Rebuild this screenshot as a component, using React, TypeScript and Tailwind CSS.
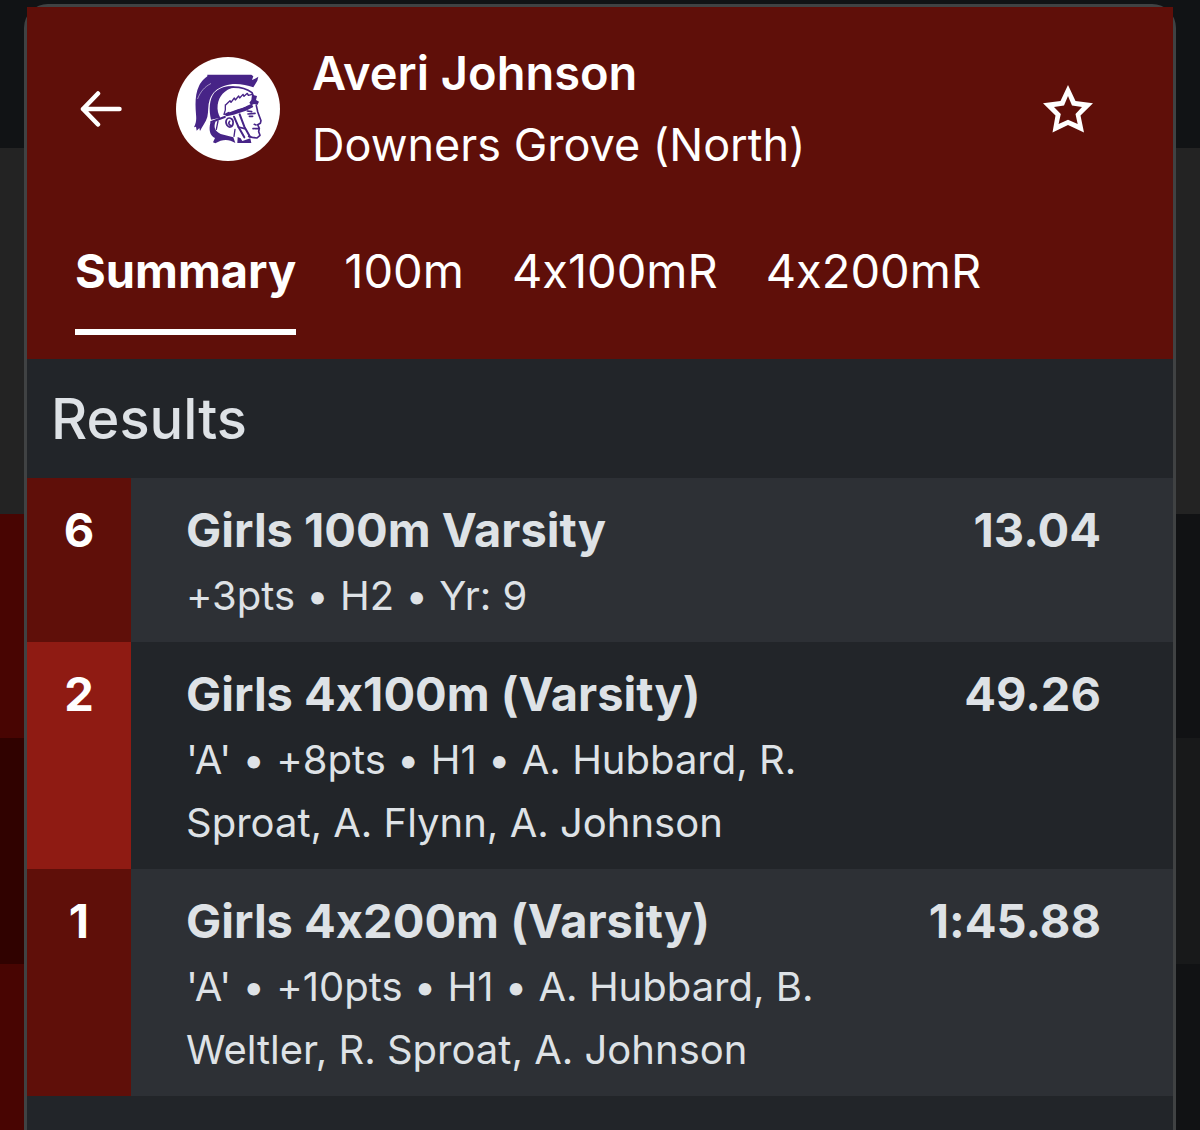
type Result = {
  place: number;
  event: string;
  mark: string;
  details: string;
};

const results: Result[] = [
  { place: 6, event: "Girls 100m Varsity", mark: "13.04", details: "+3pts • H2 • Yr: 9" },
  {
    place: 2,
    event: "Girls 4x100m (Varsity)",
    mark: "49.26",
    details: "'A' • +8pts • H1 • A. Hubbard, R. Sproat, A. Flynn, A. Johnson",
  },
  {
    place: 1,
    event: "Girls 4x200m (Varsity)",
    mark: "1:45.88",
    details: "'A' • +10pts • H1 • A. Hubbard, B. Weltler, R. Sproat, A. Johnson",
  },
];

const tabs = ["Summary", "100m", "4x100mR", "4x200mR"];

function BackArrow() {
  return (
    <svg viewBox="0 0 42 36" className="h-9 w-[42px]" fill="none" stroke="currentColor" strokeWidth="4.500" strokeLinecap="round" strokeLinejoin="round" aria-hidden="true">
      <path d="M39.500 18H3M18 2.500 3 18l15 15.500" />
    </svg>
  );
}

function Star() {
  return (
    <svg viewBox="0 0 50 48" className="h-12 w-[50px]" fill="currentColor" aria-hidden="true">
      <path
        fillRule="evenodd"
        d="M25 0 32.500 16 50 18.300 37.500 30.500 41 47.500 25 40 9.500 47.500 12.500 30.500 0 18.300 17.500 16ZM25 11 21 20.500 11 22 17.800 29 15.600 39 25 34.800 34.700 39 32.500 29 39 22 29 20.500Z"
      />
    </svg>
  );
}

function TeamLogo() {
  return (
    <svg viewBox="-42 -33 312 312" className="size-[104px] shrink-0 rounded-full bg-white" role="img" aria-label="Downers Grove North Trojans">
      <g fill="#472487">
        <path d="M52 20H184L190 25 186 36 195 32 205 26 202 38 190 58C164 48 130 44 104 53 82 60 66 74 59 95 53 112 56 130 52 147 48 163 36 176 30 189L28 180 20 188 18 176 12 178C20 163 19 151 18 139 15 106 16 76 27 54 35 38 45 30 52 25Z" />
        <path d="M186 80 201 84 198 96 207 101 202 111 192 108 184 112 178 104 184 96Z" />
        <path d="M61 165 77 160C70 177 74 190 92 198L130 208 136 225C115 212 96 214 76 226L69 223 75 210C59 203 56 184 61 165Z" />
        <path d="M143 207 152 211 157 219 181 211 184 225H142Z" />
        <path d="M72 76C90 57 114 53 134 56 102 66 87 84 83 110 81 126 85 138 91 149L63 155C56 124 58 95 72 76Z" />
        <path d="M101 139C120 129 135 124 156 120L185 107 190 117 168 128 131 140 110 145Z" />
      </g>
      <g fill="none" stroke="#472487" strokeLinecap="round" strokeLinejoin="round">
        <path d="M75 76C103 51 157 52 186 74L190 84" strokeWidth="5" />
        <path d="M106 111C107 119 107 129 102 139M106 112 120 98 123 103 133 90 136 96 146 84 149 90 159 79 162 85 172 76 175 82 187 79" strokeWidth="4" />
        <path d="M64 162 104 147" strokeWidth="7" />
        <path d="M111 172C103 158 112 147 122 151 132 154 132 174 121 177 117 178 114 176 111 172ZM119 160C114 164 117 171 122 172" strokeWidth="5" />
        <path d="M132 146 145 176 163 208M149 139 163 176 180 206" strokeWidth="6" />
        <path d="M145 177 164 182M172 129 185 131M174 138 195 136M178 145H188" strokeWidth="5" />
        <path d="M199 113 203 131 213 158 211 166 203 170 208 181 206 191 210 202 201 210 187 208 176 205M189 182 206 181M193 169 198 171" strokeWidth="5" />
        <path d="M84 159 79 184M135 184 132 205" strokeWidth="4" />
      </g>
      <g fill="none" stroke="white" strokeLinecap="round">
        <path d="M23 92C31 71 44 56 62 47" strokeWidth="1.500" />
        <path d="M120 130 168 112" strokeWidth="5" />
      </g>
    </svg>
  );
}

function ResultRow({ place, event, mark, details }: Result) {
  return (
    <li className="group flex odd:bg-[#2d3035] even:bg-[#222529]">
      <div className="w-[104px] shrink-0 pt-5 text-center text-[47px]/[64px] font-bold text-white group-odd:bg-[#5f0f09] group-even:bg-[#8f1b13]">
        {place}
      </div>
      <div className="min-w-0 flex-1 pt-5 pr-[72px] pb-[15px] pl-[55px]">
        <div className="flex justify-between gap-6 text-[47px]/[64px] font-bold">
          <h3>{event}</h3>
          <span>{mark}</span>
        </div>
        <p className="mt-0.5 max-w-[660px] text-[40px]/[63px]">{details}</p>
      </div>
    </li>
  );
}

export default function App() {
  return (
    <div className="flex min-h-screen bg-[#111315] font-['Inter',sans-serif] text-[#dee2e6] [font-feature-settings:'calt'_0]">
      <div className="flex w-6 shrink-0 flex-col" aria-hidden="true">
        <div className="h-[148px]" />
        <div className="h-[366px] bg-[#232323]" />
        <div className="h-56 bg-[#480502]" />
        <div className="h-[226px] bg-[#300200]" />
        <div className="flex-1 bg-[#480502]" />
      </div>

      <main className="mt-1 min-w-0 flex-1 rounded-t-3xl border-x-3 border-t-3 border-white/20 bg-[#222529] bg-clip-padding">
        <header className="bg-[#5f0f09] px-12 pt-[30px] pb-6 text-white">
          <div className="flex items-center">
            <button type="button" aria-label="Back" className="ml-[5px] flex w-24 justify-start">
              <BackArrow />
            </button>
            <TeamLogo />
            <div className="ml-8 min-w-0 flex-1">
              <h1 className="text-[47px]/[72px] font-semibold">Averi Johnson</h1>
              <p className="text-[45px]/[72px]">Downers Grove (North)</p>
            </div>
            <button type="button" aria-label="Add to favorites" className="mr-8">
              <Star />
            </button>
          </div>
          <nav className="mt-8 flex gap-12" aria-label="Athlete events">
            {tabs.map((tab, i) => (
              <button
                key={tab}
                type="button"
                aria-current={i === 0 ? "page" : undefined}
                className="border-b-6 border-transparent py-[26px] text-[47px]/[64px] aria-[current=page]:border-white aria-[current=page]:font-bold"
              >
                {tab}
              </button>
            ))}
          </nav>
        </header>
        <section aria-labelledby="results-heading">
          <h2 id="results-heading" className="px-6 pt-6 pb-[23px] text-[56px]/[72px] font-medium">
            Results
          </h2>
          <ol>
            {results.map((r) => (
              <ResultRow key={r.event} {...r} />
            ))}
          </ol>
        </section>
      </main>

      <div className="flex w-6 shrink-0 flex-col" aria-hidden="true">
        <div className="h-[148px]" />
        <div className="h-[366px] bg-[#232323]" />
        <div className="h-56 bg-[#111214]" />
        <div className="h-[226px] bg-[#18191a]" />
        <div className="flex-1 bg-[#111214]" />
      </div>
    </div>
  );
}
